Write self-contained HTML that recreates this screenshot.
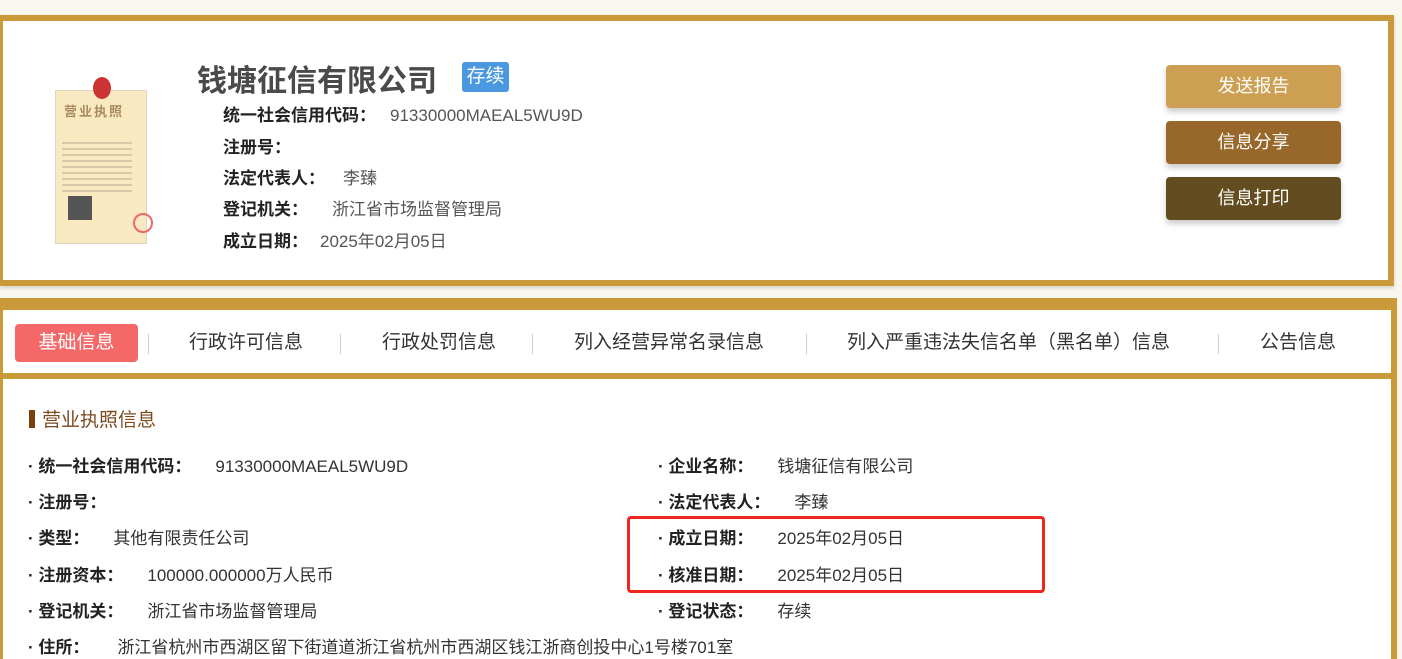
<!DOCTYPE html>
<html><head><meta charset="utf-8"><style>
html,body{margin:0;width:1402px;height:659px;overflow:hidden}
body{background:#f9f6ef;font-family:"Liberation Sans","Noto Sans CJK SC",sans-serif;position:relative}
.a{position:absolute;white-space:nowrap}
.b{font-weight:bold;color:#222}
.v{color:#555}
.btn{position:absolute;left:1166px;width:175px;height:43px;border-radius:4px;color:#fff;font-size:18px;text-align:center;line-height:43px;box-shadow:0 4px 6px rgba(0,0,0,.2)}
.tab{position:absolute;top:327px;font-size:19px;color:#333}
.sep{position:absolute;top:334px;width:1px;height:20px;background:#ccc}
.r{font-size:17px}
</style></head><body>
<div class="a" style="left:0;top:15px;width:1385px;height:259px;border:6px solid #c9993a;border-left-width:3px;background:#fff;box-shadow:0 2px 4px rgba(0,0,0,.15)"></div>
<div class="a" style="left:55px;top:90px;width:90px;height:152px;background:#f8e9c1;border:1px solid #ddd6c0"></div>
<div class="a" style="left:93px;top:77px;width:18px;height:22px;border-radius:50%;background:#c33"></div>
<div class="a" style="left:64px;top:101px;font-size:13px;color:#a98a62;font-weight:bold;letter-spacing:2px">营业执照</div>
<div class="a" style="left:62px;top:138px;width:70px;height:55px;background:repeating-linear-gradient(#f8e9c1 0,#f8e9c1 4px,#d8c8a8 4px,#d8c8a8 6px)"></div>
<div class="a" style="left:68px;top:196px;width:24px;height:24px;background:#555"></div>
<div class="a" style="left:133px;top:213px;width:16px;height:16px;border-radius:50%;border:2px solid #e66"></div>
<div class="a b" style="left:197px;top:56px;font-size:30px;color:#4a4a4a">钱塘征信有限公司</div>
<div class="a" style="left:462px;top:62px;width:47px;height:30px;background:#4a98e0;border-radius:3px;color:#fff;font-size:19px;text-align:center;line-height:30px">存续</div>
<div class="a r" style="left:223px;top:101px"><span class="b">统一社会信用代码：</span><span class="v" style="margin-left:14px">91330000MAEAL5WU9D</span></div>
<div class="a r b" style="left:223px;top:133px">注册号：</div>
<div class="a r" style="left:223px;top:164px"><span class="b">法定代表人：</span><span class="v" style="margin-left:18px">李臻</span></div>
<div class="a r" style="left:223px;top:195px"><span class="b">登记机关：</span><span class="v" style="margin-left:24px">浙江省市场监督管理局</span></div>
<div class="a r" style="left:223px;top:227px"><span class="b">成立日期：</span><span class="v" style="margin-left:12px">2025年02月05日</span></div>
<div class="btn" style="top:65px;background:#cc9f52">发送报告</div>
<div class="btn" style="top:121px;background:#98672a">信息分享</div>
<div class="btn" style="top:177px;background:#634c1f">信息打印</div>
<div class="a" style="left:0;top:298px;width:1397px;height:361px;background:#c9993a"></div>
<div class="a" style="left:3px;top:310px;width:1388px;height:63px;background:#fff"></div>
<div class="a" style="left:3px;top:379px;width:1388px;height:280px;background:#fff"></div>
<div class="a" style="left:15px;top:324px;width:123px;height:38px;background:#f56868;border-radius:4px;color:#fff;font-size:19px;text-align:center;line-height:38px">基础信息</div>
<div class="sep" style="left:148px"></div>
<div class="tab" style="left:189px">行政许可信息</div>
<div class="sep" style="left:340px"></div>
<div class="tab" style="left:382px">行政处罚信息</div>
<div class="sep" style="left:532px"></div>
<div class="tab" style="left:574px">列入经营异常名录信息</div>
<div class="sep" style="left:806px"></div>
<div class="tab" style="left:847px">列入严重违法失信名单（黑名单）信息</div>
<div class="sep" style="left:1218px"></div>
<div class="tab" style="left:1260px">公告信息</div>
<div class="a" style="left:29px;top:410px;width:6px;height:18px;background:#7b3f0c"></div>
<div class="a" style="left:42px;top:405px;font-size:19px;color:#7b4a1d">营业执照信息</div>
<div class="a r" style="left:28px;top:452px"><span class="b">· 统一社会信用代码：</span><span style="margin-left:24px;color:#333">91330000MAEAL5WU9D</span></div>
<div class="a r b" style="left:28px;top:488px">· 注册号：</div>
<div class="a r" style="left:28px;top:524px"><span class="b">· 类型：</span><span style="margin-left:24px;color:#333">其他有限责任公司</span></div>
<div class="a r" style="left:28px;top:561px"><span class="b">· 注册资本：</span><span style="margin-left:24px;color:#333">100000.000000万人民币</span></div>
<div class="a r" style="left:28px;top:597px"><span class="b">· 登记机关：</span><span style="margin-left:24px;color:#333">浙江省市场监督管理局</span></div>
<div class="a r" style="left:28px;top:633px"><span class="b">· 住所：</span><span style="margin-left:28px;color:#333">浙江省杭州市西湖区留下街道道浙江省杭州市西湖区钱江浙商创投中心1号楼701室</span></div>
<div class="a r" style="left:658px;top:452px"><span class="b">· 企业名称：</span><span style="margin-left:24px;color:#333">钱塘征信有限公司</span></div>
<div class="a r" style="left:658px;top:488px"><span class="b">· 法定代表人：</span><span style="margin-left:24px;color:#333">李臻</span></div>
<div class="a r" style="left:658px;top:524px"><span class="b">· 成立日期：</span><span style="margin-left:24px;color:#333">2025年02月05日</span></div>
<div class="a r" style="left:658px;top:561px"><span class="b">· 核准日期：</span><span style="margin-left:24px;color:#333">2025年02月05日</span></div>
<div class="a r" style="left:658px;top:597px"><span class="b">· 登记状态：</span><span style="margin-left:24px;color:#333">存续</span></div>
<div class="a" style="left:627px;top:516px;width:412px;height:71px;border:3px solid #f0251d;border-radius:4px"></div>
</body></html>
